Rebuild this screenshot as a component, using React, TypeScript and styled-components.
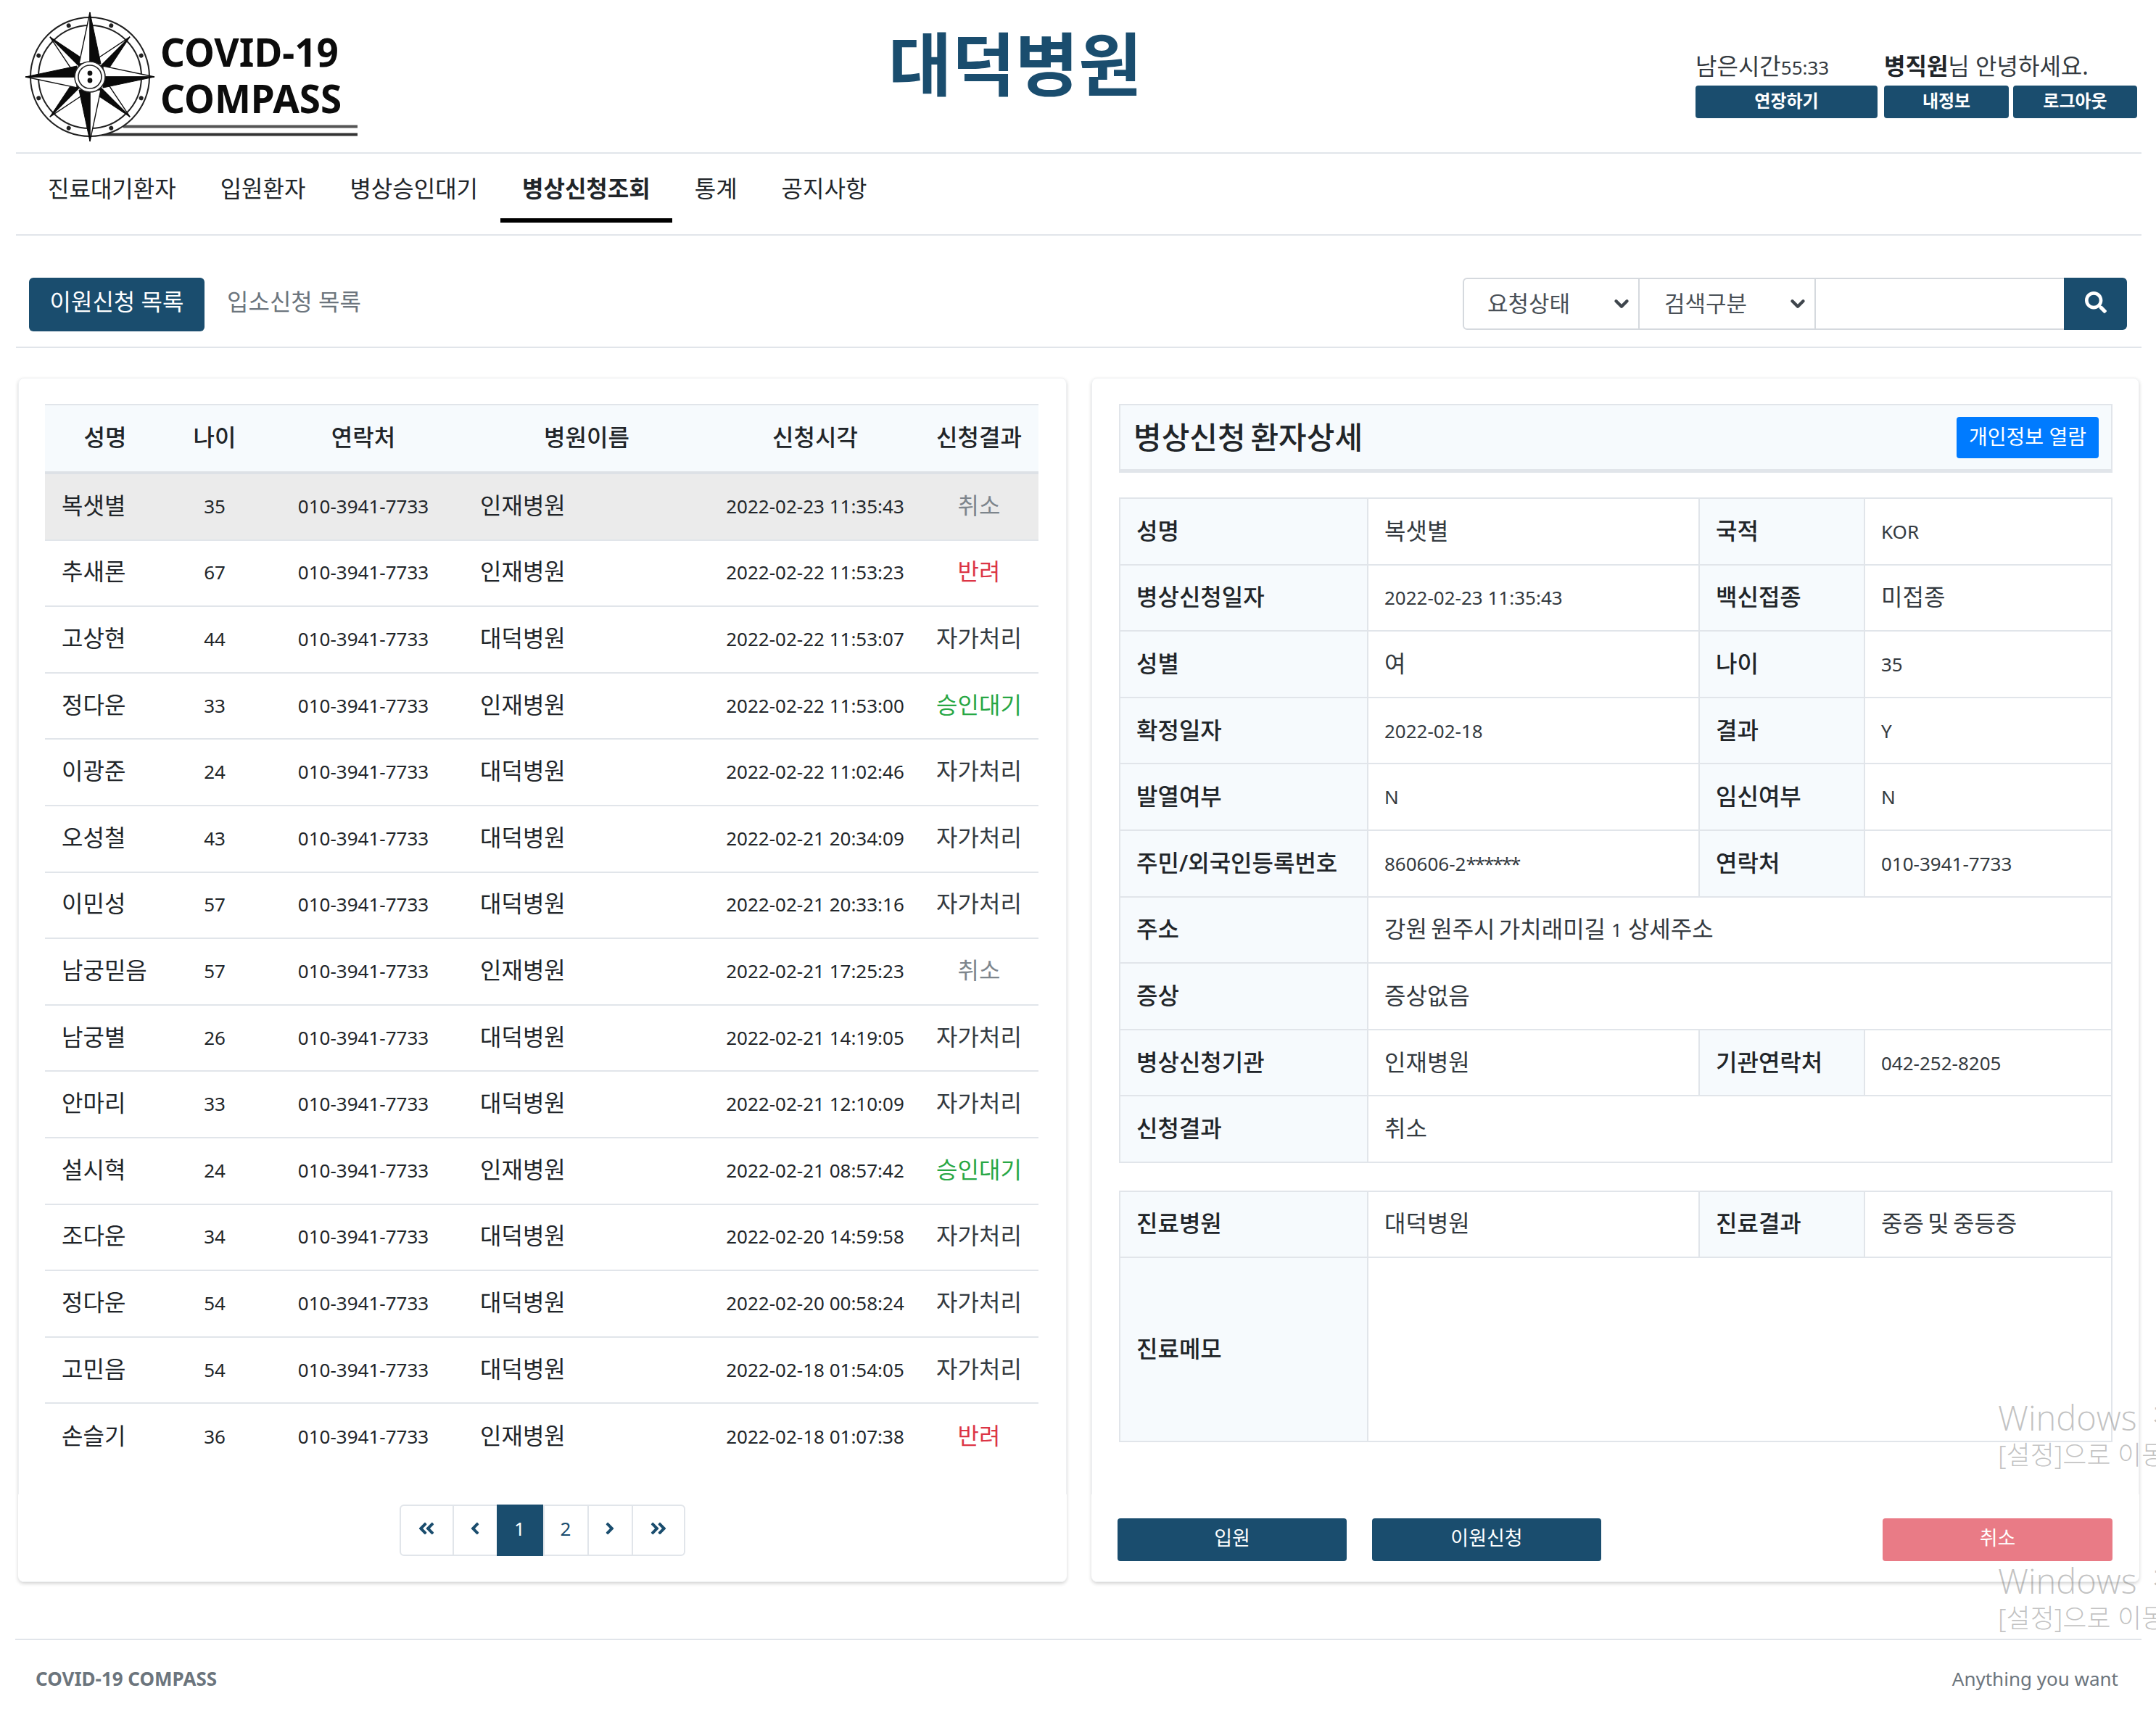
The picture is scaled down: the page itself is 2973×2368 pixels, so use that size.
import React from "react";
import styled, { createGlobalStyle } from "styled-components";
import { ChevronDown } from "lucide-react";
import { FaSearch, FaAngleDoubleLeft, FaAngleLeft, FaAngleRight, FaAngleDoubleRight } from "react-icons/fa";

const navy = "#1a4d6e";
const line = "#e1e5ea";

const GlobalStyle = createGlobalStyle`
    * { box-sizing: border-box; }
    html, body { margin: 0; padding: 0; background: #fff; overflow: hidden; }
    body {
        font-family: "Noto Sans", "Noto Sans CJK KR", sans-serif;
        font-size: 32px;
        color: #212529;
    }
`;

const Page = styled.div`
    position: relative;
    width: 2973px;
    height: 2368px;
    overflow: hidden;
    padding: 0 20px 0 22px;
`;

const Num = styled.span`
    font-size: 26px;
`;

const ValueNum = styled(Num)`
    position: relative;
    top: 3px;
    word-spacing: 0;
`;

const Masked = styled.span`
    letter-spacing: -2px;
`;

/* header */
const Header = styled.header`
    display: flex;
    height: 212px;
    border-bottom: 2px solid ${line};
`;

const Logo = styled.div`
    position: relative;
    flex: 0 0 1203px;
`;

const LogoText = styled.div`
    position: absolute;
    left: 199px;
    top: 40px;
    font-size: 53px;
    font-weight: 700;
    line-height: 64px;
    color: #0c0c0c;
`;

const Title = styled.h1`
    margin: 0;
    padding-top: 23px;
    font-size: 95px;
    line-height: 130px;
    font-weight: 700;
    color: ${navy};
`;

const UserBox = styled.div`
    display: grid;
    grid-template-columns: 254px 172px 171px;
    grid-template-rows: 46px 45px;
    column-gap: 6px;
    margin-left: auto;
    margin-right: 6px;
    padding-top: 72px;
`;

const Timer = styled.div`
    font-size: 32px;
    line-height: 38px;
    color: #343a40;
    white-space: nowrap;
`;

const Greeting = styled.div`
    grid-column: 2 / 4;
    font-size: 32px;
    line-height: 38px;
    color: #343a40;
    white-space: nowrap;

    b {
        font-weight: 700;
        color: #212529;
    }
`;

const HeadButton = styled.button<{ $first?: boolean }>`
    border: 0;
    border-radius: 4px;
    padding: 0 0 6px;
    margin-right: ${({ $first }) => ($first ? "3px" : "0")};
    background: ${navy};
    color: #fff;
    font: 700 24px "Noto Sans", "Noto Sans CJK KR", sans-serif;
`;

/* nav */
const Nav = styled.nav`
    display: flex;
    gap: 1px;
    height: 113px;
    padding-left: 14px;
    border-bottom: 2px solid ${line};
`;

const NavItem = styled.a<{ $active?: boolean }>`
    height: 95px;
    padding: 26px 30px 0;
    line-height: 44px;
    color: #212529;
    font-weight: ${({ $active }) => ($active ? 700 : 400)};
    border-bottom: 6px solid ${({ $active }) => ($active ? "#000" : "transparent")};
    white-space: nowrap;
`;

/* sub toolbar */
const SubBar = styled.div`
    display: flex;
    align-items: flex-start;
    height: 155px;
    padding: 58px 20px 0 18px;
    border-bottom: 2px solid ${line};
`;

const Tab = styled.a<{ $active?: boolean }>`
    height: 74px;
    width: ${({ $active }) => ($active ? "242px" : "auto")};
    padding: 0 ${({ $active }) => ($active ? "0" : "31px")};
    border-radius: 6px;
    text-align: center;
    line-height: 66px;
    background: ${({ $active }) => ($active ? navy : "transparent")};
    color: ${({ $active }) => ($active ? "#fff" : "#6c757d")};
    white-space: nowrap;
`;

const SearchGroup = styled.div`
    display: flex;
    height: 72px;
    margin-left: auto;
`;

const SelectBox = styled.div<{ $first?: boolean }>`
    display: flex;
    align-items: center;
    justify-content: space-between;
    width: ${({ $first }) => ($first ? "244px" : "243px")};
    padding: 0 8px 6px ${({ $first }) => ($first ? "32px" : "34px")};
    border: 2px solid #d5d9de;
    border-left-width: ${({ $first }) => ($first ? "2px" : "0")};
    border-radius: ${({ $first }) => ($first ? "6px 0 0 6px" : "0")};
    color: #495057;
    font-size: 31px;

    svg {
        margin-top: 6px;
        color: #3f464d;
    }
`;

const SearchInput = styled.div`
    width: 342px;
    border: 2px solid #d5d9de;
    border-left-width: 0;
    border-right-width: 0;
`;

const SearchButton = styled.div`
    display: flex;
    align-items: center;
    justify-content: center;
    width: 87px;
    padding-bottom: 4px;
    border-radius: 0 6px 6px 0;
    background: ${navy};
    color: #fff;
    font-size: 30px;
`;

/* cards */
const Panels = styled.div`
    display: flex;
    gap: 34px;
    margin: 41px 3px 0;
`;

const Card = styled.section<{ $w: number }>`
    display: flex;
    flex-direction: column;
    width: ${({ $w }) => $w}px;
    height: 1661px;
    padding-top: 35px;
    border: 1px solid #eef0f2;
    border-radius: 8px;
    box-shadow: 0 2px 5px rgba(0, 0, 0, 0.18);
`;

const CardBody = styled.div`
    padding: 0 36px;
`;

const CardFooter = styled.div<{ $top: number }>`
    display: flex;
    margin: auto -1px 0;
    height: 120px;
    padding: ${({ $top }) => $top}px 37px 0 36px;
    background: #fff;
    border-radius: 0 0 8px 8px;
`;

const listCols = "166px 136px 274px 342px 288px 164px";

const List = styled.div`
    width: 1370px;
`;

const ListHead = styled.div`
    display: grid;
    grid-template-columns: ${listCols};
    align-items: center;
    height: 97px;
    padding-bottom: 7px;
    border-top: 2px solid ${line};
    border-bottom: 4px solid #dde1e6;
    background: #f6fafd;
    font-weight: 500;
    text-align: center;
`;

const ListRow = styled.div<{ $selected?: boolean; $last?: boolean }>`
    display: grid;
    grid-template-columns: ${listCols};
    align-items: center;
    height: 91.6px;
    padding-bottom: 4px;
    border-bottom: ${({ $last }) => ($last ? "0" : `2px solid ${line}`)};
    background: ${({ $selected }) => ($selected ? "#ebebeb" : "transparent")};
`;

const Cell = styled.div<{ $left?: number; $tone?: string }>`
    text-align: ${({ $left }) => ($left ? "left" : "center")};
    padding-left: ${({ $left }) => $left || 0}px;
    color: ${({ $tone }) => $tone || "#212529"};
    white-space: nowrap;
    line-height: 44px;
`;

const Pagination = styled.div`
    display: flex;
    height: 71px;
    margin: 0 auto;
    border: 2px solid ${line};
    border-radius: 6px;
    color: ${navy};
`;

const PageLink = styled.div<{ $w: number; $active?: boolean }>`
    display: flex;
    align-items: center;
    justify-content: center;
    width: ${({ $w }) => $w}px;
    margin: ${({ $active }) => ($active ? "-2px 0" : "0")};
    padding-bottom: 6px;
    border-left: ${({ $active }) => ($active ? "0" : `2px solid ${line}`)};
    background: ${({ $active }) => ($active ? navy : "transparent")};
    color: ${({ $active }) => ($active ? "#fff" : navy)};
    font-size: 26px;

    &:first-child {
        border-left: 0;
    }
`;

/* detail */
const DetailTitle = styled.div`
    display: flex;
    align-items: center;
    justify-content: space-between;
    height: 95px;
    margin-left: 1px;
    padding: 0 17px 6px 18px;
    border: 2px solid ${line};
    border-bottom-width: 5px;
    background: #f6fafd;
    font-size: 42px;
    font-weight: 500;
    word-spacing: -4px;
`;

const BlueButton = styled.button`
    width: 196px;
    height: 57px;
    margin-top: 6px;
    padding: 0 0 4px;
    border: 0;
    border-radius: 4px;
    background: #007bff;
    color: #fff;
    font: 400 28px "Noto Sans", "Noto Sans CJK KR", sans-serif;
`;

const DetailTable = styled.div<{ $top: number }>`
    margin: ${({ $top }) => $top}px 0 0 1px;
    border: 2px solid ${line};
    border-bottom-width: 0;
`;

const DetailRow = styled.div<{ $wide?: boolean; $h?: number }>`
    display: grid;
    grid-template-columns: ${({ $wide }) => ($wide ? "340px 1fr" : "340px 457px 228px 1fr")};
    height: ${({ $h }) => $h || 91.6}px;
    border-bottom: 2px solid ${line};
`;

const Label = styled.div`
    display: flex;
    align-items: center;
    padding: 0 0 6px 22px;
    background: #f6fafd;
    font-weight: 500;
    white-space: nowrap;

    &:nth-child(3) {
        border-left: 2px solid ${line};
    }
`;

const Value = styled.div`
    display: flex;
    align-items: center;
    gap: 8px;
    padding: 0 0 6px 22px;
    border-left: 2px solid ${line};
    color: #343a40;
    white-space: pre;
    word-spacing: -3px;
`;

const ActionButton = styled.button<{ $danger?: boolean; $push?: boolean }>`
    width: ${({ $danger }) => ($danger ? "317px" : "316px")};
    height: 59px;
    padding: 0 0 8px;
    margin-right: ${({ $push }) => ($push ? "35px" : "0")};
    margin-left: ${({ $danger }) => ($danger ? "auto" : "0")};
    border: 0;
    border-radius: 4px;
    background: ${({ $danger }) => ($danger ? "#e97b86" : navy)};
    color: #fff;
    font: 400 27px "Noto Sans", "Noto Sans CJK KR", sans-serif;
`;

/* footer */
const Footer = styled.footer`
    display: flex;
    justify-content: space-between;
    height: 108px;
    margin-top: 78px;
    margin-left: -1px;
    padding: 31px 32px 0 28px;
    border-top: 2px solid ${line};
    font-size: 26px;
    line-height: 44px;
    color: #6c757d;

    b {
        font-weight: 700;
    }
`;

const Watermark = styled.div<{ $top: number }>`
    position: absolute;
    left: 2755px;
    top: ${({ $top }) => $top}px;
    color: rgba(120, 120, 120, 0.45);
    white-space: nowrap;
    pointer-events: none;

    div:first-child {
        font-family: "Open Sans", sans-serif;
        font-weight: 300;
        font-size: 47px;
        line-height: 60px;
        word-spacing: 8px;
    }

    div:last-child {
        font-size: 36px;
        line-height: 44px;
        font-weight: 300;
    }
`;

function CompassArm({ angle, len, w }: { angle: number; len: number; w: number }) {
    return (
        <g transform={`rotate(${angle})`}>
            <path d={`M0,${-len} L${-w},-18 L0,-18 Z`} fill="#fff" stroke="#111" strokeWidth="1.4" />
            <path d={`M0,${-len} L${w},-18 L0,-18 Z`} fill="#0a0a0a" stroke="#0a0a0a" strokeWidth="1" />
        </g>
    );
}

function LogoArt() {
    const ticks = [22.5, 67.5, 112.5, 157.5, 202.5, 247.5, 292.5, 337.5];
    return (
        <svg width="480" height="200" viewBox="0 0 480 200" style={{ display: "block" }}>
            <path d="M148 174.5H471" stroke="#555" strokeWidth="4" />
            <path d="M118 185.5H471" stroke="#333" strokeWidth="4" />
            <g transform="translate(102 106)">
                <circle r="82" fill="#fff" stroke="#222" strokeWidth="2" />
                <circle r="71" fill="#fff" stroke="#222" strokeWidth="2" />
                {ticks.map((a) => (
                    <g key={a} transform={`rotate(${a})`}>
                        <circle cy="-76.5" r="3" fill="#222" />
                    </g>
                ))}
                {[45, 135, 225, 315].map((a) => (
                    <CompassArm key={a} angle={a} len={78} w={12} />
                ))}
                {[0, 90, 180, 270].map((a) => (
                    <CompassArm key={a} angle={a} len={89} w={15} />
                ))}
                <circle r="21" fill="#fff" stroke="#222" strokeWidth="1.6" />
                <circle r="16" fill="#fff" stroke="#222" strokeWidth="1.6" />
                <circle cy="-5" r="3.4" fill="#111" />
                <circle cy="5" r="3.4" fill="#111" />
            </g>
        </svg>
    );
}

const CANCEL = "#7d858c";
const REJECT = "#dc3545";
const WAIT = "#28a745";
const SELF = "#343a40";

const rows = [
    ["복샛별", "35", "인재병원", "2022-02-23 11:35:43", "취소", CANCEL],
    ["추새론", "67", "인재병원", "2022-02-22 11:53:23", "반려", REJECT],
    ["고상현", "44", "대덕병원", "2022-02-22 11:53:07", "자가처리", SELF],
    ["정다운", "33", "인재병원", "2022-02-22 11:53:00", "승인대기", WAIT],
    ["이광준", "24", "대덕병원", "2022-02-22 11:02:46", "자가처리", SELF],
    ["오성철", "43", "대덕병원", "2022-02-21 20:34:09", "자가처리", SELF],
    ["이민성", "57", "대덕병원", "2022-02-21 20:33:16", "자가처리", SELF],
    ["남궁믿음", "57", "인재병원", "2022-02-21 17:25:23", "취소", CANCEL],
    ["남궁별", "26", "대덕병원", "2022-02-21 14:19:05", "자가처리", SELF],
    ["안마리", "33", "대덕병원", "2022-02-21 12:10:09", "자가처리", SELF],
    ["설시혁", "24", "인재병원", "2022-02-21 08:57:42", "승인대기", WAIT],
    ["조다운", "34", "대덕병원", "2022-02-20 14:59:58", "자가처리", SELF],
    ["정다운", "54", "대덕병원", "2022-02-20 00:58:24", "자가처리", SELF],
    ["고민음", "54", "대덕병원", "2022-02-18 01:54:05", "자가처리", SELF],
    ["손슬기", "36", "인재병원", "2022-02-18 01:07:38", "반려", REJECT],
];

export default function App() {
    return (
        <Page>
            <GlobalStyle />
            <Header>
                <Logo>
                    <LogoArt />
                    <LogoText>
                        COVID-19
                        <br />
                        COMPASS
                    </LogoText>
                </Logo>
                <Title>대덕병원</Title>
                <UserBox>
                    <Timer>
                        남은시간<Num>55:33</Num>
                    </Timer>
                    <Greeting>
                        <b>병직원</b>님 안녕하세요.
                    </Greeting>
                    <HeadButton $first>연장하기</HeadButton>
                    <HeadButton>내정보</HeadButton>
                    <HeadButton>로그아웃</HeadButton>
                </UserBox>
            </Header>

            <Nav>
                <NavItem>진료대기환자</NavItem>
                <NavItem>입원환자</NavItem>
                <NavItem>병상승인대기</NavItem>
                <NavItem $active>병상신청조회</NavItem>
                <NavItem>통계</NavItem>
                <NavItem>공지사항</NavItem>
            </Nav>

            <SubBar>
                <Tab $active>이원신청 목록</Tab>
                <Tab>입소신청 목록</Tab>
                <SearchGroup>
                    <SelectBox $first>
                        요청상태
                        <ChevronDown size={30} strokeWidth={3.5} />
                    </SelectBox>
                    <SelectBox>
                        검색구분
                        <ChevronDown size={30} strokeWidth={3.5} />
                    </SelectBox>
                    <SearchInput />
                    <SearchButton>
                        <FaSearch />
                    </SearchButton>
                </SearchGroup>
            </SubBar>

            <Panels>
                <Card $w={1446}>
                    <CardBody>
                        <List>
                            <ListHead>
                                <div>성명</div>
                                <div>나이</div>
                                <div>연락처</div>
                                <div>병원이름</div>
                                <div>신청시각</div>
                                <div>신청결과</div>
                            </ListHead>
                            {rows.map((r, i) => (
                                <ListRow key={i} $selected={i === 0} $last={i === rows.length - 1}>
                                    <Cell $left={23}>{r[0]}</Cell>
                                    <Cell>
                                        <Num>{r[1]}</Num>
                                    </Cell>
                                    <Cell>
                                        <Num>010-3941-7733</Num>
                                    </Cell>
                                    <Cell $left={24}>{r[2]}</Cell>
                                    <Cell>
                                        <Num>{r[3]}</Num>
                                    </Cell>
                                    <Cell $tone={r[5]}>{r[4]}</Cell>
                                </ListRow>
                            ))}
                        </List>
                    </CardBody>
                    <CardFooter $top={14}>
                        <Pagination>
                            <PageLink $w={71}>
                                <FaAngleDoubleLeft />
                            </PageLink>
                            <PageLink $w={61}>
                                <FaAngleLeft />
                            </PageLink>
                            <PageLink $w={64} $active>
                                1
                            </PageLink>
                            <PageLink $w={61}>2</PageLink>
                            <PageLink $w={61}>
                                <FaAngleRight />
                            </PageLink>
                            <PageLink $w={72}>
                                <FaAngleDoubleRight />
                            </PageLink>
                        </Pagination>
                    </CardFooter>
                </Card>

                <Card $w={1445}>
                    <CardBody>
                        <DetailTitle>
                            병상신청 환자상세
                            <BlueButton>개인정보 열람</BlueButton>
                        </DetailTitle>
                        <DetailTable $top={34}>
                            <DetailRow>
                                <Label>성명</Label>
                                <Value>복샛별</Value>
                                <Label>국적</Label>
                                <Value>
                                    <ValueNum>KOR</ValueNum>
                                </Value>
                            </DetailRow>
                            <DetailRow>
                                <Label>병상신청일자</Label>
                                <Value>
                                    <ValueNum>2022-02-23 11:35:43</ValueNum>
                                </Value>
                                <Label>백신접종</Label>
                                <Value>미접종</Value>
                            </DetailRow>
                            <DetailRow>
                                <Label>성별</Label>
                                <Value>여</Value>
                                <Label>나이</Label>
                                <Value>
                                    <ValueNum>35</ValueNum>
                                </Value>
                            </DetailRow>
                            <DetailRow>
                                <Label>확정일자</Label>
                                <Value>
                                    <ValueNum>2022-02-18</ValueNum>
                                </Value>
                                <Label>결과</Label>
                                <Value>
                                    <ValueNum>Y</ValueNum>
                                </Value>
                            </DetailRow>
                            <DetailRow>
                                <Label>발열여부</Label>
                                <Value>
                                    <ValueNum>N</ValueNum>
                                </Value>
                                <Label>임신여부</Label>
                                <Value>
                                    <ValueNum>N</ValueNum>
                                </Value>
                            </DetailRow>
                            <DetailRow>
                                <Label>주민/외국인등록번호</Label>
                                <Value>
                                    <ValueNum>
                                        860606-2<Masked>******</Masked>
                                    </ValueNum>
                                </Value>
                                <Label>연락처</Label>
                                <Value>
                                    <ValueNum>010-3941-7733</ValueNum>
                                </Value>
                            </DetailRow>
                            <DetailRow $wide>
                                <Label>주소</Label>
                                <Value>
                                    강원 원주시 가치래미길
                                    <ValueNum>1</ValueNum>
                                    상세주소
                                </Value>
                            </DetailRow>
                            <DetailRow $wide>
                                <Label>증상</Label>
                                <Value>증상없음</Value>
                            </DetailRow>
                            <DetailRow>
                                <Label>병상신청기관</Label>
                                <Value>인재병원</Value>
                                <Label>기관연락처</Label>
                                <Value>
                                    <ValueNum>042-252-8205</ValueNum>
                                </Value>
                            </DetailRow>
                            <DetailRow $wide>
                                <Label>신청결과</Label>
                                <Value>취소</Value>
                            </DetailRow>
                        </DetailTable>
                        <DetailTable $top={38}>
                            <DetailRow $h={91}>
                                <Label>진료병원</Label>
                                <Value>대덕병원</Value>
                                <Label>진료결과</Label>
                                <Value>중증 및 중등증</Value>
                            </DetailRow>
                            <DetailRow $wide $h={254}>
                                <Label>진료메모</Label>
                                <Value />
                            </DetailRow>
                        </DetailTable>
                    </CardBody>
                    <CardFooter $top={33}>
                        <ActionButton $push>입원</ActionButton>
                        <ActionButton>이원신청</ActionButton>
                        <ActionButton $danger>취소</ActionButton>
                    </CardFooter>
                </Card>
            </Panels>

            <Footer>
                <b>COVID-19 COMPASS</b>
                <span>Anything you want</span>
            </Footer>

            <Watermark $top={1925}>
                <div>Windows 정품 인증</div>
                <div>[설정]으로 이동하여 Windows를 정품 인증합니다.</div>
            </Watermark>
            <Watermark $top={2150}>
                <div>Windows 정품 인증</div>
                <div>[설정]으로 이동하여 Windows를 정품 인증합니다.</div>
            </Watermark>
        </Page>
    );
}
